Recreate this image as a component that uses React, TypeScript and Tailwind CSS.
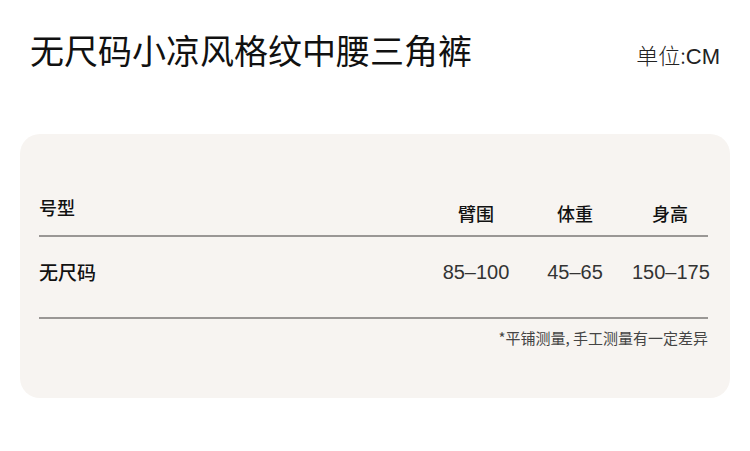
const cjk = "font-['Noto_Sans_CJK_SC','Noto_Sans',sans-serif]";
const num = "font-['Liberation_Sans','Noto_Sans_CJK_SC',sans-serif]";

const columns = [
  { label: "臂围", value: "85–100", cls: "w-[78px] mr-[22px]" },
  { label: "体重", value: "45–65", cls: "w-[76px] mr-[19px]" },
  { label: "身高", value: "150–175", cls: "w-[76px]" },
];

export default function App() {
  return (
    <div className={`w-[750px] h-[451px] bg-white ${cjk}`}>
      <div className="flex items-start justify-between px-[30px] pt-[33px]">
        <h1 className="text-[34px] leading-[34px] font-normal text-[#111]">
          无尺码小凉风格纹中腰三角裤
        </h1>
        <span className="mt-[10px] text-[22px] leading-[22px] font-light text-[#222]">
          单位:<span className={`${num} font-normal`}>CM</span>
        </span>
      </div>

      <div className="mx-[20px] mt-[66px] h-[264px] rounded-[20px] bg-[#f7f4f1] pl-[19px] pr-[22px] pt-[60px]">
        <div className="flex items-end h-[41px] pb-[13px]">
          <div className="flex-1 mb-[6px] text-[18px] leading-[18px] font-medium text-[#111]">号型</div>
          {columns.map((c) => (
            <div key={c.label} className={`${c.cls} text-center text-[18px] leading-[18px] font-medium text-[#111]`}>
              {c.label}
            </div>
          ))}
        </div>
        <div className="h-[2px] bg-[#9a9795]" />

        <div className="flex items-center h-[80px] pb-[10px]">
          <div className="flex-1 text-[19px] leading-[20px] font-medium text-[#111]">无尺码</div>
          {columns.map((c) => (
            <div key={c.label} className={`${c.cls} ${num} text-center text-[20px] leading-[20px] text-[#333] whitespace-nowrap`}>
              {c.value}
            </div>
          ))}
        </div>
        <div className="h-[2px] bg-[#9a9795]" />

        <div className="mt-[11px] text-right text-[15px] leading-[15px] text-[#444]">
          *平铺测量, 手工测量有一定差异
        </div>
      </div>
    </div>
  );
}
